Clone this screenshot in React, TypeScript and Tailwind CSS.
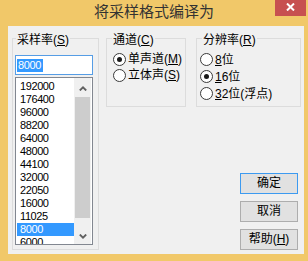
import React from 'react';

const rates = ['192000', '176400', '96000', '88200', '64000', '48000', '44100', '32000', '22050', '16000', '11025', '8000', '6000'];

function Radio({ checked, children, h }: { checked?: boolean; children: React.ReactNode; h: string }) {
  return (
    <div className={`flex items-center gap-[2px] ${h}`}>
      <span className="w-[13px] h-[13px] rounded-full border border-[#3a3a3a] bg-white flex items-center justify-center shrink-0">
        {checked && <span className="w-[5px] h-[5px] rounded-full bg-[#1a1a1a]" />}
      </span>
      <span className="leading-[16px]">{children}</span>
    </div>
  );
}

function Chevron({ up }: { up?: boolean }) {
  return (
    <svg width="8" height="5" viewBox="0 0 8 5">
      <path d={up ? 'M0.8 4.5 L4 1.3 L7.2 4.5' : 'M0.8 0.5 L4 3.7 L7.2 0.5'} fill="none" stroke="#606060" strokeWidth="1.8" />
    </svg>
  );
}

export default function App() {
  return (
    <div className="w-[308px] h-[261px] bg-[#f1c869] flex flex-col overflow-hidden font-['Liberation_Sans','Noto_Sans_CJK_SC',sans-serif] text-[12px] text-black">
      <div className="grid grid-cols-[1fr_auto_1fr] h-[26px] shrink-0">
        <div />
        <div className="text-[15px] leading-[21px] text-[#333] font-['Noto_Sans_CJK_SC',sans-serif]">将采样格式编译为</div>
        <div className="flex justify-end">
          <div className="w-[31px] h-[16px] mr-[2px] bg-[#c75050] flex justify-center pt-[3px]">
            <svg width="9" height="8" viewBox="0 0 9 8">
              <path d="M1 0.5 L8 7.5 M8 0.5 L1 7.5" stroke="white" strokeWidth="2" />
            </svg>
          </div>
        </div>
      </div>

      <div className="ml-[8px] mr-[4px] h-[228px] shrink-0 bg-[#f0f0f0] flex pl-[4px] pt-[4px] pr-[3px] pb-[4px]">
        <fieldset className="w-[87px] h-[220px] border border-[#dcdcdc] px-[2px] pb-[4px] flex flex-col shrink-0">
          <legend className="ml-[1px] px-[1px] pt-[3px] leading-[14px]">
            采样率(<u>S</u>)
          </legend>
          <div className="mt-[8px] w-[78px] h-[20px] border border-[#569de5] bg-white flex items-center pl-[1px] shrink-0">
            <span className="bg-[#3399ff] text-white text-[11px] tracking-[-0.4px] leading-[12px] pl-[1px] pr-[2px] py-[0.5px]">8000</span>
          </div>
          <div className="mt-[2px] w-[78px] h-[168px] border border-[#828790] bg-white flex pl-[1px] pr-[1px] shrink-0 overflow-hidden">
            <div className="w-[57px] pt-[2px] flex flex-col">
              {rates.map((r) => (
                <div
                  key={r}
                  className={`h-[13px] leading-[13px] shrink-0 pl-[3px] text-[11px] tracking-[-0.4px] ${r === '8000' ? 'bg-[#3399ff] text-white' : ''}`}
                >
                  {r}
                </div>
              ))}
            </div>
            <div className="w-[17px] bg-[#f0f0f0] flex flex-col">
              <div className="h-[19px] flex items-center justify-center pt-[2px]">
                <Chevron up />
              </div>
              <div className="h-[121px] mx-[1px] bg-[#cdcdcd]" />
              <div className="flex-1 flex items-end justify-center pb-[5px]">
                <Chevron />
              </div>
            </div>
          </div>
        </fieldset>

        <div className="flex-1 ml-[7px] flex flex-col">
          <div className="flex">
            <fieldset className="w-[80px] h-[77px] border border-[#dcdcdc] pl-[6px] shrink-0">
              <legend className="ml-[-1px] px-[1px] pt-[3px] leading-[14px]">
                通道(<u>C</u>)
              </legend>
              <div className="mt-[4px]">
                <Radio checked h="h-[16px]">
                  单声道(<u>M</u>)
                </Radio>
                <Radio h="h-[16px]">
                  立体声(<u>S</u>)
                </Radio>
              </div>
            </fieldset>
            <fieldset className="flex-1 ml-[10px] h-[77px] border border-[#dcdcdc] pl-[3px]">
              <legend className="ml-[2px] px-[1px] pt-[3px] leading-[14px]">
                分辨率(<u>R</u>)
              </legend>
              <div className="mt-[4px]">
                <Radio h="h-[17px]">
                  <u>8</u>位
                </Radio>
                <Radio checked h="h-[17px]">
                  <u>1</u>6位
                </Radio>
                <Radio h="h-[17px]">
                  <u>3</u>2位(浮点)
                </Radio>
              </div>
            </fieldset>
          </div>

          <div className="mt-auto mr-[3px] flex flex-col items-end gap-[7px]">
            <button className="w-[58px] h-[21px] bg-[#e1e1e1] border border-[#3c9af0] leading-[19px]">确定</button>
            <button className="w-[58px] h-[21px] bg-[#e1e1e1] border border-[#adadad] leading-[19px]">取消</button>
            <button className="w-[58px] h-[21px] bg-[#e1e1e1] border border-[#adadad] leading-[19px]">
              帮助(<u>H</u>)
            </button>
          </div>
        </div>
      </div>
    </div>
  );
}
